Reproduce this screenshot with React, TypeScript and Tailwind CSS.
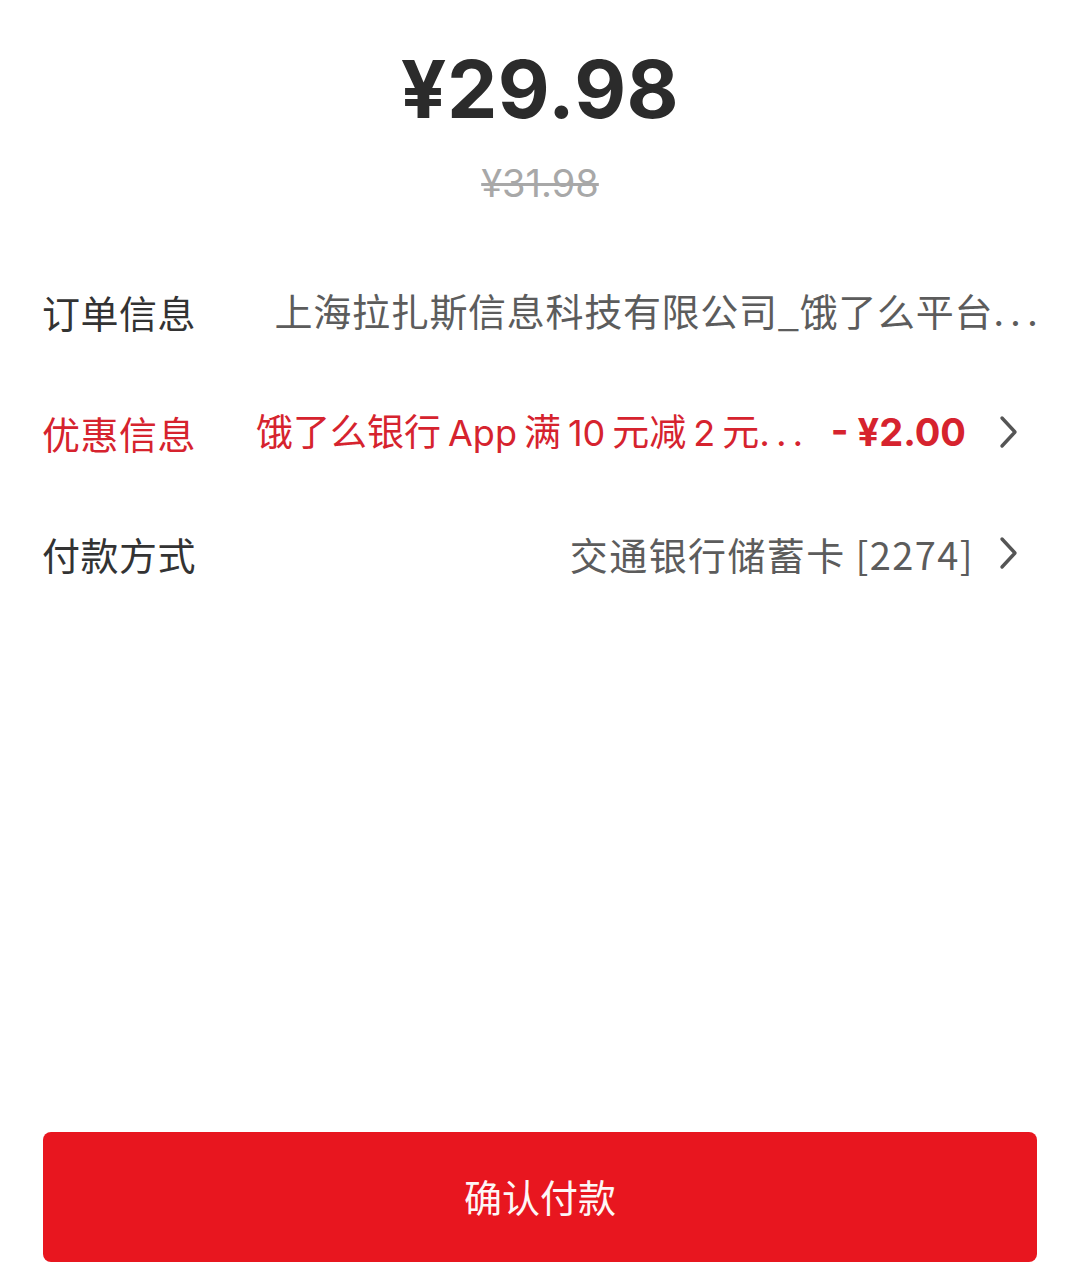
import React from "react";

const Chevron = () => (
  <svg width="22" height="36" viewBox="0 0 22 36" className="shrink-0">
    <path d="M4 4 L17 18 L4 32" fill="none" stroke="#555" strokeWidth="3.4" strokeLinecap="round" strokeLinejoin="round" />
  </svg>
);

const cjk = { fontFamily: '"Noto Sans CJK SC", sans-serif' };
const lat = { fontFamily: 'Inter, "Noto Sans CJK SC", sans-serif' };

const Dots = () => (
  <span style={lat}>
    <span className="tracking-[6px]">..</span>
    <span className="tracking-normal">.</span>
  </span>
);

export default function App() {
  return (
    <div className="w-[1080px] h-[1273px] bg-white flex flex-col" style={cjk}>
      <div className="flex flex-col items-center pt-[39px]" style={lat}>
        <div className="text-[80px] leading-[100px] font-bold text-[#2b2b2b] tracking-[0.5px]">¥29.98</div>
        <div className="mt-[24px] text-[38px] leading-[40px] text-[#a8a8a8] line-through decoration-[3px]">¥31.98</div>
      </div>

      <div className="flex flex-col px-[42px] mt-[78px] text-[38px]">
        <div className="flex items-center h-[60px]">
          <div className="w-[224px] shrink-0 text-[#333] tracking-[0.5px]">订单信息</div>
          <div className="flex-1 min-w-0 whitespace-nowrap overflow-hidden text-[#5c5c5c] text-right tracking-[0.7px]">上海拉扎斯信息科技有限公司_饿了么平台<Dots /></div>
        </div>
        <div className="flex items-center h-[60px] mt-[61px]">
          <div className="w-[214px] shrink-0 text-[#d6232e] tracking-[0.5px]">优惠信息</div>
          <div className="flex-1 min-w-0 whitespace-nowrap text-[37px] text-[#d6232e]">
            饿了么银行<span className="mx-[7px] text-[36px]" style={lat}>App</span>满<span className="mx-[7px] text-[36px]" style={lat}>10</span>元减<span className="mx-[7px] text-[36px]" style={lat}>2</span>元<Dots />
          </div>
          <div className="shrink-0 ml-[10px] font-bold text-[#d6232e]" style={lat}>- ¥2.00</div>
          <div className="ml-[32px] mr-[18px]"><Chevron /></div>
        </div>
        <div className="flex items-center h-[60px] mt-[61px]">
          <div className="w-[214px] shrink-0 text-[#333] tracking-[0.5px]">付款方式</div>
          <div className="flex-1 min-w-0 whitespace-nowrap overflow-hidden text-[#5c5c5c] text-right tracking-[1.4px]">交通银行储蓄卡 [2274]</div>
          <div className="ml-[24px] mr-[18px]"><Chevron /></div>
        </div>
      </div>

      <div className="flex-1" />
      <div className="px-[43px] pb-[11px]">
        <div className="h-[130px] rounded-[8px] bg-[#e8161f] flex items-center justify-center text-[#fdf6f6] text-[38px] pb-[4px]">确认付款</div>
      </div>
    </div>
  );
}
